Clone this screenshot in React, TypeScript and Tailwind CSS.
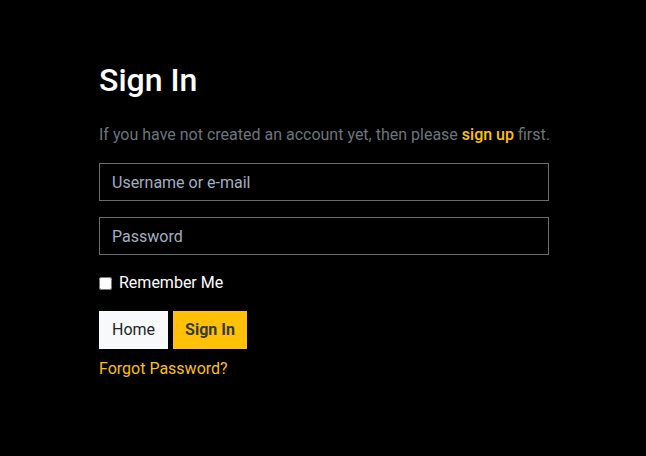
export default function App() {
  return (
    <div
      className="min-h-[456px] bg-black pt-[61px] pl-[99px]"
      style={{ fontFamily: "Roboto, 'Liberation Sans', sans-serif" }}
    >
      <div className="w-[450px]">
        <h2 className="text-[32px] leading-[1.2] font-medium text-white">Sign In</h2>
        <p className="mt-6 whitespace-nowrap text-base leading-6 text-[#6c757d]">
          If you have not created an account yet, then please{" "}
          <a href="#" className="font-medium text-[#ffc107]">
            sign up
          </a>{" "}
          first.
        </p>
        <form className="mt-4 flex flex-col" onSubmit={(e) => e.preventDefault()}>
          <input
            type="text"
            placeholder="Username or e-mail"
            className="h-[38px] w-full border border-[#6c6c6c] bg-black px-3 text-base text-white outline-none placeholder:text-[#a3afc2]"
          />
          <input
            type="password"
            placeholder="Password"
            className="mt-4 h-[38px] w-full border border-[#6c6c6c] bg-black px-3 text-base text-white outline-none placeholder:text-[#a3afc2]"
          />
          <label className="mt-4 flex h-6 items-center gap-[7px] text-base text-white">
            <input type="checkbox" className="h-[13px] w-[13px]" />
            Remember Me
          </label>
          <div className="mt-4 flex gap-[5px]">
            <button type="button" className="h-[38px] w-[69px] bg-[#f8f9fa] text-base text-[#212529]">
              Home
            </button>
            <button type="submit" className="h-[38px] w-[74px] bg-[#ffc107] text-base font-bold text-[#343a40]">
              Sign In
            </button>
          </div>
          <a href="#" className="mt-2 text-base leading-6 text-[#ffc107]">
            Forgot Password?
          </a>
        </form>
      </div>
    </div>
  );
}
